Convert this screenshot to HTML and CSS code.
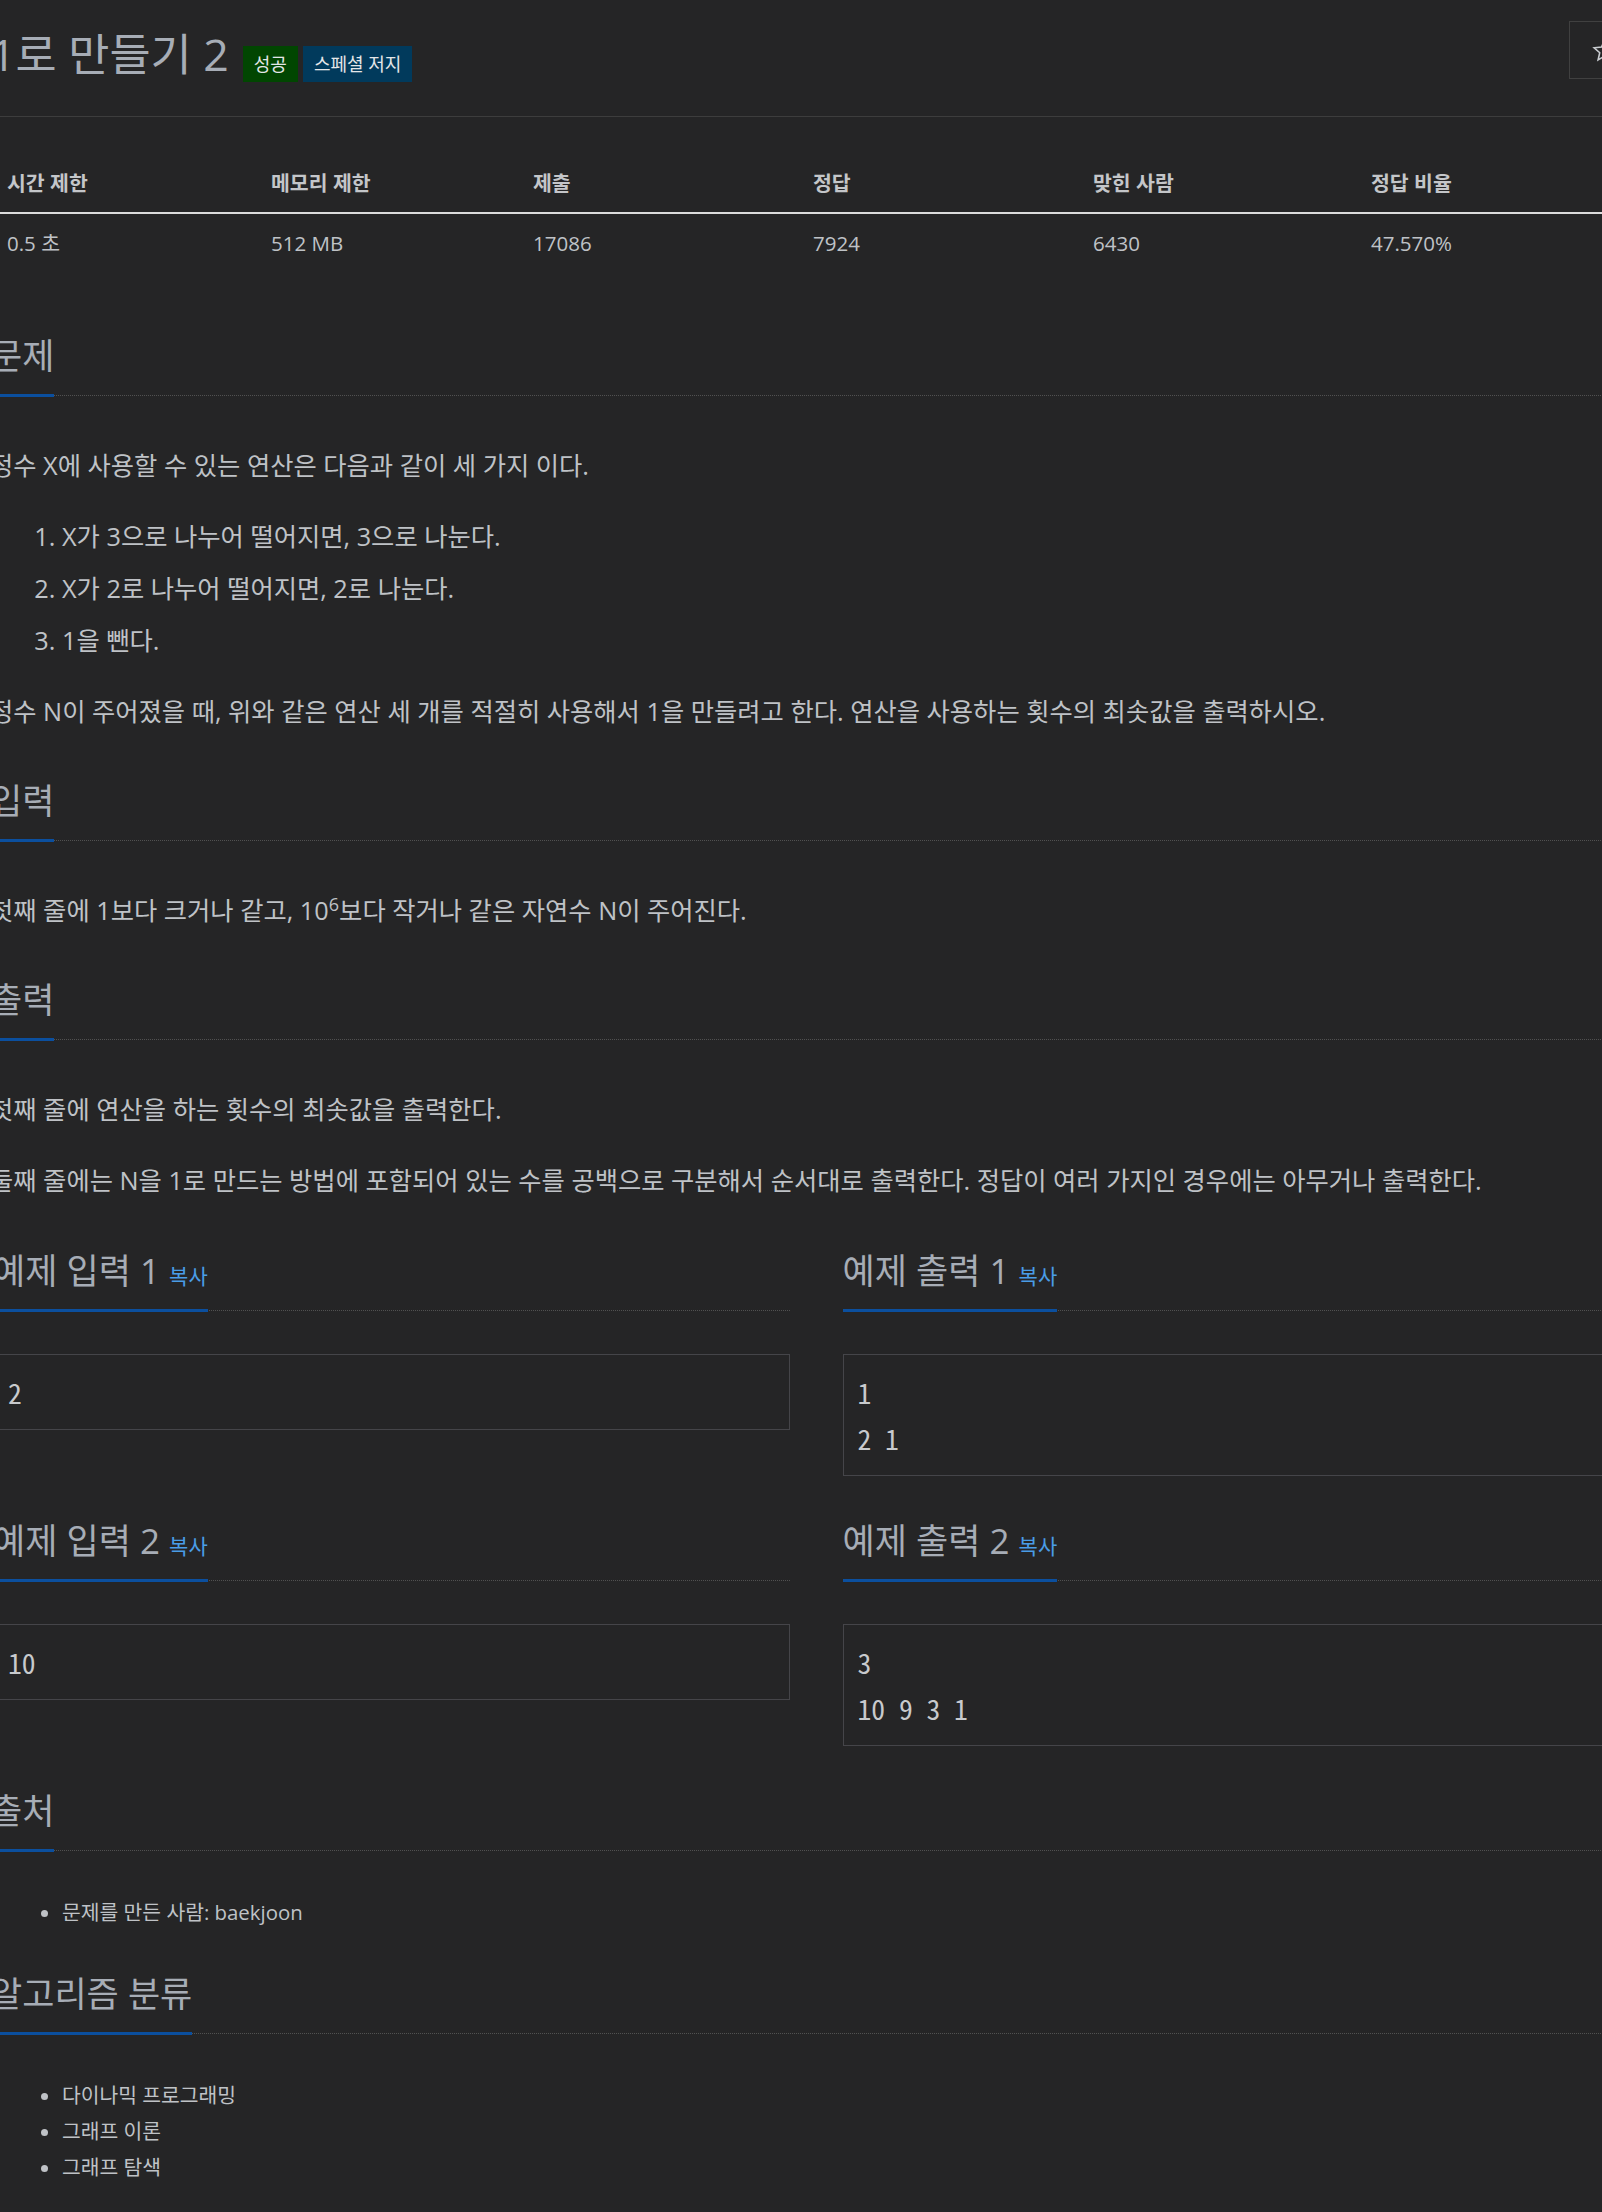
FILE: index.html
```html
<!DOCTYPE html>
<html lang="ko">
<head>
<meta charset="utf-8">
<title>1로 만들기 2</title>
<link rel="stylesheet" href="styles.css">
</head>
<body>
<div class="page">
  <header class="problem-header">
    <h1 class="title">
      <span class="title-text">1로 만들기 2</span>
      <span class="label label-success">성공</span>
      <span class="label label-special">스페셜 저지</span>
    </h1>
    <button class="star-btn" type="button" aria-label="즐겨찾기">
      <svg class="star-icon" viewBox="0 0 24 24" width="25" height="25"><path d="M12 2.2l2.85 6.55 7.1.65-5.38 4.72 1.6 6.98L12 17.45 5.83 21.1l1.6-6.98L2.05 9.4l7.1-.65z" fill="none" stroke="#c9ccd0" stroke-width="1.5" stroke-linejoin="miter"/></svg>
    </button>
  </header>

  <table class="info">
    <thead>
      <tr>
        <th class="col-a">시간 제한</th>
        <th class="col-b">메모리 제한</th>
        <th class="col-c">제출</th>
        <th class="col-d">정답</th>
        <th class="col-e">맞힌 사람</th>
        <th class="col-f">정답 비율</th>
      </tr>
    </thead>
    <tbody>
      <tr>
        <td>0.5 초</td>
        <td>512 MB</td>
        <td>17086</td>
        <td>7924</td>
        <td>6430</td>
        <td>47.570%</td>
      </tr>
    </tbody>
  </table>

  <section class="section section-first">
    <div class="headline"><h2>문제</h2></div>
    <div class="problem-text">
      <p>정수 X에 사용할 수 있는 연산은 다음과 같이 세 가지 이다.</p>
      <ol>
        <li>X가 3으로 나누어 떨어지면, 3으로 나눈다.</li>
        <li>X가 2로 나누어 떨어지면, 2로 나눈다.</li>
        <li>1을 뺀다.</li>
      </ol>
      <p>정수 N이 주어졌을 때, 위와 같은 연산 세 개를 적절히 사용해서 1을 만들려고 한다. 연산을 사용하는 횟수의 최솟값을 출력하시오.</p>
    </div>
  </section>

  <section class="section">
    <div class="headline"><h2>입력</h2></div>
    <div class="problem-text">
      <p>첫째 줄에 1보다 크거나 같고, 10<sup>6</sup>보다 작거나 같은 자연수 N이 주어진다.</p>
    </div>
  </section>

  <section class="section">
    <div class="headline"><h2>출력</h2></div>
    <div class="problem-text">
      <p>첫째 줄에 연산을 하는 횟수의 최솟값을 출력한다.</p>
      <p>둘째 줄에는 N을 1로 만드는 방법에 포함되어 있는 수를 공백으로 구분해서 순서대로 출력한다. 정답이 여러 가지인 경우에는 아무거나 출력한다.</p>
    </div>
  </section>

  <div class="samples">
    <section class="sample">
      <div class="headline"><h2>예제 입력 1 <a class="copy">복사</a></h2></div>
      <pre class="sampledata">2</pre>
    </section>
    <section class="sample">
      <div class="headline"><h2>예제 출력 1 <a class="copy">복사</a></h2></div>
      <pre class="sampledata">1
2 1</pre>
    </section>
    <section class="sample">
      <div class="headline"><h2>예제 입력 2 <a class="copy">복사</a></h2></div>
      <pre class="sampledata">10</pre>
    </section>
    <section class="sample">
      <div class="headline"><h2>예제 출력 2 <a class="copy">복사</a></h2></div>
      <pre class="sampledata">3
10 9 3 1</pre>
    </section>
  </div>

  <section class="section section-source">
    <div class="headline"><h2>출처</h2></div>
    <ul class="small-list">
      <li>문제를 만든 사람: baekjoon</li>
    </ul>
  </section>

  <section class="section">
    <div class="headline"><h2>알고리즘 분류</h2></div>
    <ul class="small-list">
      <li>다이나믹 프로그래밍</li>
      <li>그래프 이론</li>
      <li>그래프 탐색</li>
    </ul>
  </section>
</div>
</body>
</html>
```

FILE: styles.css
```css
html, body {
  margin: 0;
  padding: 0;
  background: #252526;
}

body {
  overflow: hidden;
  font-family: "Open Sans", "Noto Sans CJK KR", sans-serif;
  color: #bfc2c6;
}

.page {
  display: flex;
  flex-direction: column;
  margin-left: -10px;
  width: 1649px;
}

/* header */
.problem-header {
  display: flex;
  justify-content: space-between;
  align-items: flex-start;
  padding: 21px 0 37px;
  border-bottom: 1px solid #3d3d3d;
}

.title {
  display: flex;
  align-items: baseline;
  height: 50px;
  margin: 8px 0 0;
  font-size: 44.7px;
  font-weight: 400;
  line-height: 50px;
  color: #a7adb6;
}

.label {
  font-size: 18px;
  line-height: 36px;
  padding: 0 11px;
  color: #e4e6e8;
}

.label-success {
  background: #014601;
  margin-left: 14px;
}

.label-special {
  background: #013a5c;
  margin-left: 5px;
}

.star-btn {
  display: flex;
  align-items: center;
  justify-content: center;
  width: 70px;
  height: 58px;
  padding: 0;
  border: 1px solid #404040;
  background: transparent;
}

.star-icon {
  display: block;
}

/* info table */
.info {
  width: 100%;
  table-layout: fixed;
  border-collapse: collapse;
  margin: 37px 0 0;
}

.info th,
.info td {
  text-align: left;
  padding: 15px 0 15px 17px;
  font-size: 20.5px;
  line-height: 28px;
}

.info th {
  font-weight: 700;
  color: #c4c6c9;
  border-bottom: 2px solid #dcdcdc;
}

.info td {
  color: #bfc2c6;
}

.col-a { width: 247px; }
.col-b { width: 245px; }
.col-c { width: 263px; }
.col-d { width: 263px; }
.col-e { width: 261px; }

/* sections */
.section {
  margin-top: 42px;
}

.section-first {
  margin-top: 62px;
}

.section-source {
  margin-top: 43px;
}

.headline {
  display: flex;
  border-bottom: 1px dotted #515151;
  margin-bottom: 43px;
}

.headline h2 {
  margin: 0 0 -2px;
  padding-bottom: 16px;
  border-bottom: 3px solid #0b4f9e;
  font-size: 35px;
  font-weight: 400;
  line-height: 44px;
  color: #a7adb6;
  white-space: nowrap;
}

.problem-text p {
  margin: 0 0 19px;
  font-size: 25.3px;
  line-height: 52px;
}

.problem-text p:last-child {
  margin-bottom: 0;
}

.problem-text ol {
  margin: 0 0 19px;
  padding-left: 72px;
  font-size: 25.3px;
  line-height: 52px;
}

.problem-text sup {
  font-size: 18px;
  line-height: 0;
}

/* samples */
.samples {
  display: grid;
  grid-template-columns: 1fr 1fr;
  column-gap: 53px;
  row-gap: 43px;
  margin-top: 43px;
  margin-left: 3px;
}

.copy {
  font-size: 21px;
  line-height: 0;
  color: #4a9de6;
  text-decoration: none;
}

.sampledata {
  margin: 0;
  padding: 14px 14px;
  border: 1px solid #454549;
  background: transparent;
  font-family: "Noto Sans Mono CJK KR", "DejaVu Sans Mono", monospace;
  font-size: 27.6px;
  line-height: 46px;
  color: #c8cacd;
}

/* lists */
.small-list {
  margin: 0;
  padding-left: 72px;
  font-size: 20.4px;
  line-height: 36px;
}
```
